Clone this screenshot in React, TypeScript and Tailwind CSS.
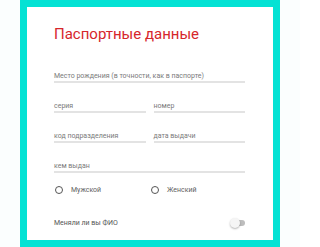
import React from "react";

const font = { fontFamily: "Roboto, 'Noto Sans', sans-serif" };

function Field({ label, className = "" }: { label: string; className?: string }) {
  return (
    <div className={`border-b-2 border-[#e3e3e3] ${className}`}>
      <div className="text-[7px] leading-[10px] text-[#7a7a7a]">{label}</div>
    </div>
  );
}

function Radio({ label }: { label: string }) {
  return (
    <div className="flex items-center">
      <span className="h-[8px] w-[8px] rounded-full border-[1.5px] border-[#555]" />
      <span className="ml-[8px] text-[7px] leading-[10px] text-[#616161]">{label}</span>
    </div>
  );
}

export default function App() {
  return (
    <div className="h-[247px] w-[300px] overflow-hidden bg-[#fbfefe] pl-[20px]" style={font}>
      <div className="h-[249px] w-[260px] border-[7px] border-b-[9px] border-[#04e2d4] bg-white pl-[27px] pr-[28px] pt-[18px]">
        <h1 className="text-[15px] font-normal leading-[18px] text-[#d6262b]">Паспортные данные</h1>

        <div className="mt-[28px] flex flex-col gap-[18px]">
          <Field label="Место рождения (в точности, как в паспорте)" />
          <div className="flex gap-[8px]">
            <Field label="серия" className="flex-1" />
            <Field label="номер" className="flex-1" />
          </div>
          <div className="flex gap-[8px]">
            <Field label="код подразделения" className="flex-1" />
            <Field label="дата выдачи" className="flex-1" />
          </div>
          <Field label="кем выдан" />
        </div>

        <div className="mt-[12px] flex pl-[1px]">
          <div className="w-[96px]">
            <Radio label="Мужской" />
          </div>
          <Radio label="Женский" />
        </div>

        <div className="mt-[23px] flex items-center justify-between">
          <span className="text-[7px] leading-[10px] text-[#555]">Меняли ли вы ФИО</span>
          <div className="relative h-[6px] w-[14px] rounded-full bg-[#bdbdbd]">
            <span className="absolute left-[-1px] top-[-2px] h-[10px] w-[10px] rounded-full bg-[#f5f5f5] shadow-[0_1px_2px_rgba(0,0,0,0.3)]" />
          </div>
        </div>
      </div>
    </div>
  );
}
